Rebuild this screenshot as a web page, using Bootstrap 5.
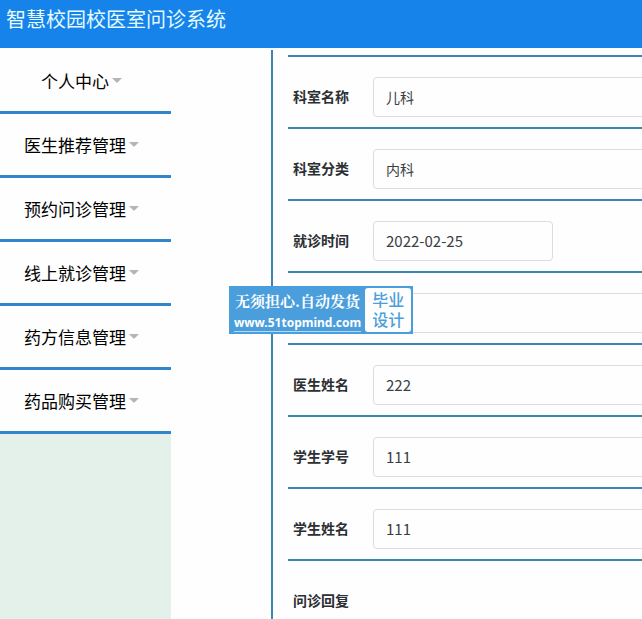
<!DOCTYPE html>
<html lang="zh-CN">
<head>
<meta charset="utf-8">
<meta name="viewport" content="width=device-width, initial-scale=1">
<title>智慧校园校医室问诊系统</title>
<link href="https://cdn.jsdelivr.net/npm/bootstrap@5.3.0/dist/css/bootstrap.min.css" rel="stylesheet">
<style>
  body { font-family: "Noto Sans CJK SC", sans-serif; background: #fdfefd; color: #000; }
  .topbar { background: #1583e9; height: 48px; padding: 4px 6px; }
  .topbar h1 { font-size: 20px; line-height: 30px; font-weight: 400; color: #e4fbff; }
  .workspace { padding-top: 2px; }
  .side { width: 171px; background: #e4f0ea; }
  .side-item { height: 64px; padding: 0 8px 0 0; gap: 3px; font-size: 17px; font-weight: 400; line-height: 24px; color: #000;
    background: #fdfefd; border: 0; border-bottom: 3px solid #2f86cd; }
  .side-item::after { color: #b4b6b6; margin: 0; border-width: 5px 5px 0; }
  .panel { margin-left: 100px; padding: 5px 0 0 15px; border-left: 2px solid #3a86b4; }
  .field { height: 72px; padding: 20px 0 10px 5px; border-top: 2px solid #3a86b4; }
  .field label, .field .caption { width: 80px; padding-bottom: 2px; font-size: 14px; font-weight: 700; line-height: 20px; color: #2c2f33; }
  .field .form-control { height: 40px; min-width: 400px; padding: 0 12px; font-size: 14px; font-weight: 400; color: #3a3d42;
    background: #fdfefd; border: 1px solid #dadce1; border-radius: 4px; }
  .field .num { font-size: 15px; padding-bottom: 2px; }
  .field .date { min-width: 0; width: 180px; }
  .promo { left: 229px; top: 286px; padding: 2px; background: #4a9edc; color: #fff; }
  .promo-main { padding: 1px 4px 0 3px; }
  .promo-text { font-family: "Noto Serif CJK SC", "Noto Sans CJK SC", serif; font-size: 15px; font-weight: 700; line-height: 24px; white-space: nowrap; }
  .promo a { font-family: "Noto Sans", sans-serif; font-size: 12px; font-weight: 700; line-height: 17px; padding-top: 1px; color: #fff; text-decoration: none; border-bottom: 1px solid #b5daf4; }
  .promo-tag { width: 46px; padding: 1px 7px; background: #fdfefd; color: #4a9edc; border-radius: 3px; font-size: 16px; line-height: 20px; font-weight: 500; }
</style>
</head>
<body class="vh-100 d-flex flex-column overflow-hidden">
<header class="topbar flex-shrink-0"><h1 class="m-0">智慧校园校医室问诊系统</h1></header>
<div class="workspace d-flex flex-grow-1 overflow-hidden">
  <nav class="side flex-shrink-0 d-flex flex-column" aria-label="主菜单">
    <button type="button" class="side-item dropdown-toggle d-flex align-items-center justify-content-center">个人中心</button>
    <button type="button" class="side-item dropdown-toggle d-flex align-items-center justify-content-center">医生推荐管理</button>
    <button type="button" class="side-item dropdown-toggle d-flex align-items-center justify-content-center">预约问诊管理</button>
    <button type="button" class="side-item dropdown-toggle d-flex align-items-center justify-content-center">线上就诊管理</button>
    <button type="button" class="side-item dropdown-toggle d-flex align-items-center justify-content-center">药方信息管理</button>
    <button type="button" class="side-item dropdown-toggle d-flex align-items-center justify-content-center">药品购买管理</button>
  </nav>
  <main class="panel flex-grow-1 overflow-hidden">
    <form>
      <div class="field d-flex align-items-center"><label class="flex-shrink-0" for="f1">科室名称</label><input class="form-control" id="f1" type="text" value="儿科"></div>
      <div class="field d-flex align-items-center"><label class="flex-shrink-0" for="f2">科室分类</label><input class="form-control" id="f2" type="text" value="内科"></div>
      <div class="field d-flex align-items-center"><label class="flex-shrink-0" for="f3">就诊时间</label><input class="form-control num date" id="f3" type="text" value="2022-02-25"></div>
      <div class="field d-flex align-items-center"><label class="flex-shrink-0" for="f4"></label><input class="form-control" id="f4" type="text"></div>
      <div class="field d-flex align-items-center"><label class="flex-shrink-0" for="f5">医生姓名</label><input class="form-control num" id="f5" type="text" value="222"></div>
      <div class="field d-flex align-items-center"><label class="flex-shrink-0" for="f6">学生学号</label><input class="form-control num" id="f6" type="text" value="111"></div>
      <div class="field d-flex align-items-center"><label class="flex-shrink-0" for="f7">学生姓名</label><input class="form-control num" id="f7" type="text" value="111"></div>
      <div class="field d-flex align-items-center"><span class="caption flex-shrink-0">问诊回复</span></div>
    </form>
  </main>
</div>
<aside class="promo position-absolute d-flex">
  <div class="promo-main d-flex flex-column align-items-center">
    <span class="promo-text">无须担心.自动发货</span>
    <a href="#">www.51topmind.com</a>
  </div>
  <div class="promo-tag flex-shrink-0">毕业设计</div>
</aside>
<script src="https://cdn.jsdelivr.net/npm/bootstrap@5.3.0/dist/js/bootstrap.bundle.min.js"></script>
</body>
</html>
